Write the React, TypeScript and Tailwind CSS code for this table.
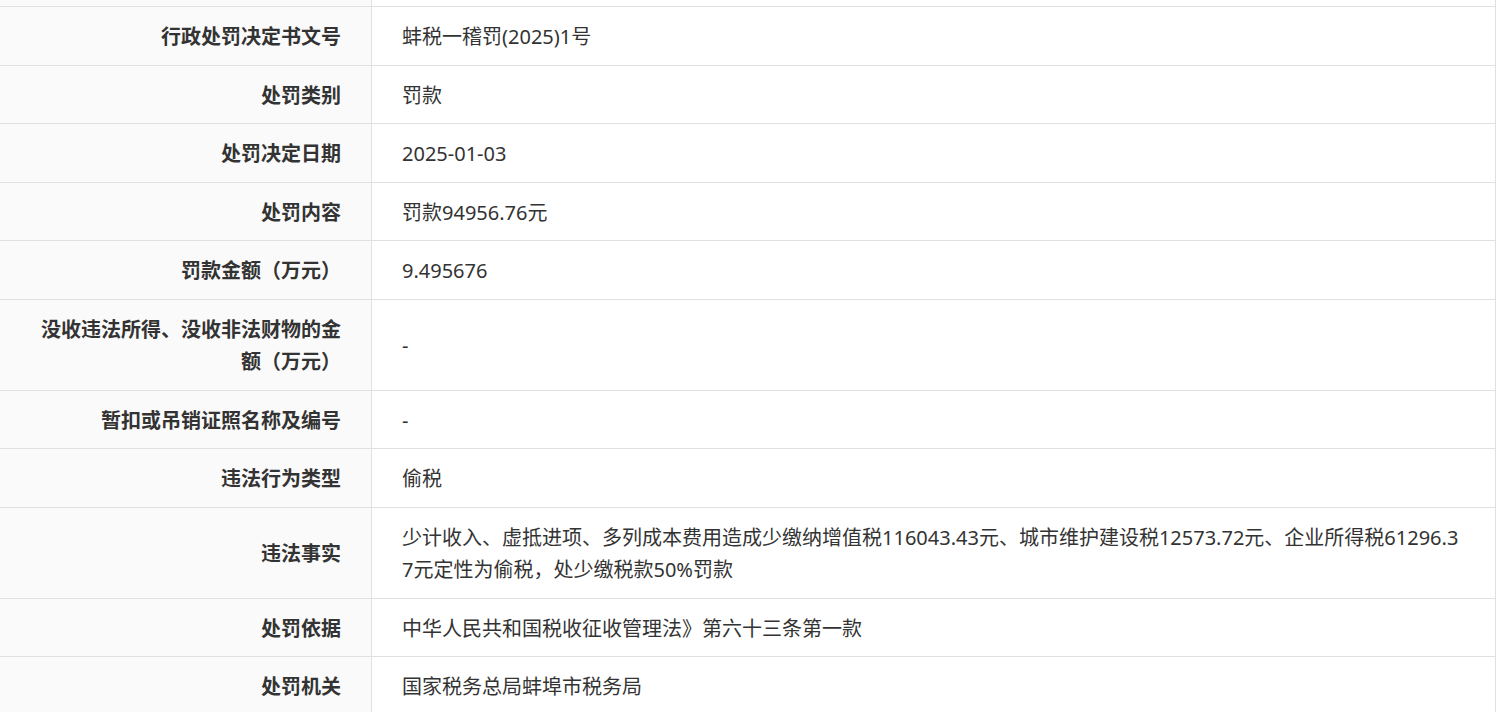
const rows: { label: string; value: string }[] = [
  { label: "行政处罚决定书文号", value: "蚌税一稽罚(2025)1号" },
  { label: "处罚类别", value: "罚款" },
  { label: "处罚决定日期", value: "2025-01-03" },
  { label: "处罚内容", value: "罚款94956.76元" },
  { label: "罚款金额（万元）", value: "9.495676" },
  { label: "没收违法所得、没收非法财物的金额（万元）", value: "-" },
  { label: "暂扣或吊销证照名称及编号", value: "-" },
  { label: "违法行为类型", value: "偷税" },
  {
    label: "违法事实",
    value:
      "少计收入、虚抵进项、多列成本费用造成少缴纳增值税116043.43元、城市维护建设税12573.72元、企业所得税61296.37元定性为偷税，处少缴税款50%罚款",
  },
  { label: "处罚依据", value: "中华人民共和国税收征收管理法》第六十三条第一款" },
  { label: "处罚机关", value: "国家税务总局蚌埠市税务局" },
]

export default function App() {
  return (
    <div
      className="min-h-screen bg-white text-[20px] text-[#333]"
      style={{ fontFamily: '"Noto Sans", "Noto Sans CJK SC", sans-serif' }}
    >
      <div className="w-[1496px] border-r border-[#e0e0e0]">
        {/* row above, cut off by the screenshot */}
        <div className="flex h-[7px] border-b border-[#e0e0e0]">
          <div className="w-[372px] shrink-0 border-r border-[#e0e0e0] bg-[#fafafa]" />
          <div className="flex-1" />
        </div>

        {rows.map((row) => (
          <div key={row.label} className="flex border-b border-[#e0e0e0]">
            <div className="flex w-[372px] shrink-0 items-center justify-end border-r border-[#e0e0e0] bg-[#fafafa] pt-[14px] pb-[11px] pl-[30px] pr-[30px] text-right font-bold leading-[32.5px] text-[#333]">
              {row.label}
            </div>
            <div className="flex flex-1 items-center pt-[14px] pb-[11px] pl-[30px] pr-[30px] leading-[32.5px] break-all">
              <span>{row.value}</span>
            </div>
          </div>
        ))}
      </div>
    </div>
  )
}
